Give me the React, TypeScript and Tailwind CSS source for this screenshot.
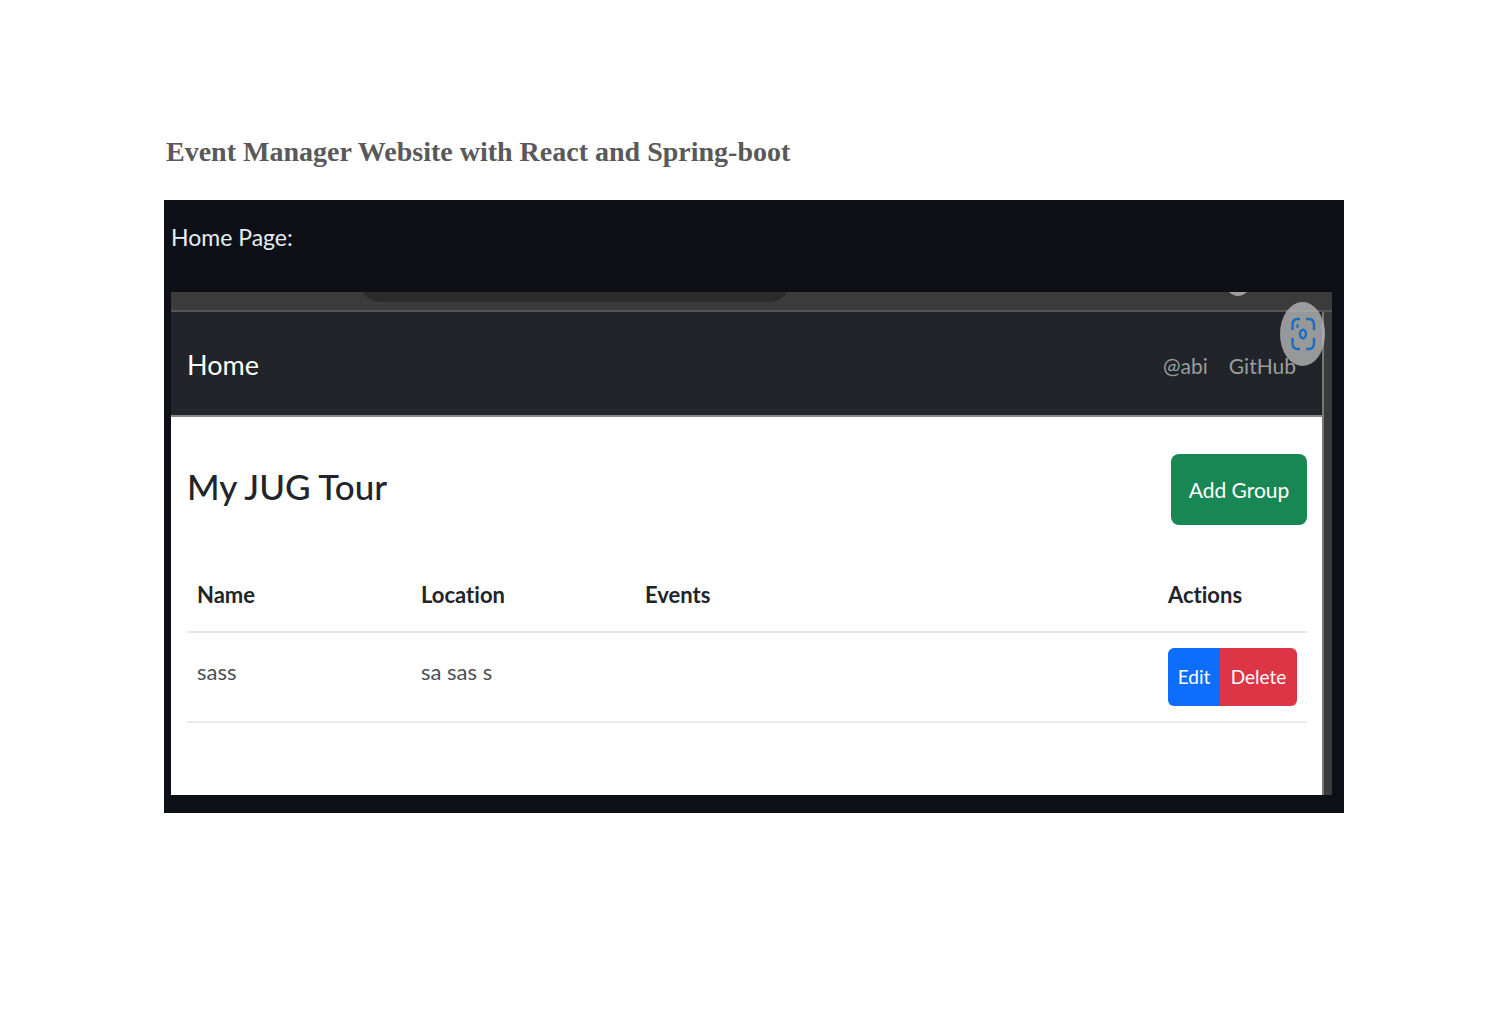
const groups = [{ name: 'sass', location: 'sa sas s', events: '' }];

function LensButton() {
  return (
    <button
      type="button"
      aria-label="Search this image"
      className="absolute -top-[10px] -right-[3px] h-16 w-[45px] rounded-[50%] bg-[#b4b5b6]/80"
    >
      <svg viewBox="0 0 45 64" className="h-full w-full" fill="none" stroke="#1a6cc4" strokeWidth="2.4">
        <path d="M12.500 28v-5q0-6 5-6h2.500" />
        <path d="M26 17h3q5 0 5 6v5" />
        <path d="M34 36v5q0 6-5 6h-3" />
        <path d="M20 47h-2.500q-5 0-5-6v-5" />
        <ellipse cx="23" cy="32" rx="3" ry="4.200" />
        <path d="M17.500 22v4" strokeWidth="2" />
      </svg>
    </button>
  );
}

function BrowserStrip() {
  return (
    <div className="flex h-5 items-start border-b-2 border-[#575757] bg-[#3b3b3b]">
      <div className="w-[192px]" />
      <svg viewBox="0 0 424 10" preserveAspectRatio="none" className="h-[10px] w-[424px]" fill="#2b2b2b">
        <path d="M0 0h424q-5 10-20 10H20Q5 10 0 0z" />
      </svg>
      <div className="grow" />
      <svg viewBox="0 0 18 4" className="mr-[85px] h-1 w-[18px]" fill="#a39d9d">
        <path d="M0 0h18q-9 8-18 0z" />
      </svg>
    </div>
  );
}

function Navbar() {
  return (
    <nav className="relative flex h-[105px] items-center border-b-2 border-[#85878a] bg-[#212529] pt-1 pr-[26px] pl-4">
      <a href="#home" className="grow text-[27px] text-white">
        Home
      </a>
      <div className="flex gap-[21px] text-[21px] text-[#9b9d9e]">
        <a href="#abi">@abi</a>
        <a href="#github">GitHub</a>
      </div>
      <LensButton />
    </nav>
  );
}

function GroupTable() {
  return (
    <table className="mt-[33px] w-full table-fixed text-left text-[22px] text-[#212529]">
      <thead>
        <tr className="h-[74px] border-b-2 border-[#e2e6ea]">
          <th className="w-[20%] px-[10px]">Name</th>
          <th className="w-[20%] px-[10px]">Location</th>
          <th className="px-[10px]">Events</th>
          <th className="w-[149px] px-[10px]">Actions</th>
        </tr>
      </thead>
      <tbody>
        {groups.map((group) => (
          <tr key={group.name} className="h-[90px] border-b-2 border-[#e9ebee] align-top text-[#4b4f54]">
            <td className="px-[10px] pt-[22px]">{group.name}</td>
            <td className="px-[10px] pt-[22px]">{group.location}</td>
            <td className="px-[10px] pt-[22px]">{group.events}</td>
            <td className="px-[10px] pt-[15px]">
              <div className="flex h-[58px] overflow-hidden rounded-md text-[19px] text-white">
                <button type="button" className="w-[52px] bg-[#0d6efd]">
                  Edit
                </button>
                <button type="button" className="grow bg-[#dc3545]">
                  Delete
                </button>
              </div>
            </td>
          </tr>
        ))}
      </tbody>
    </table>
  );
}

export default function App() {
  return (
    <main className="bg-white px-[160px] pt-[130px] pb-16 font-[Lato,sans-serif] [font-variant-ligatures:none]">
      <h1 className="pl-1.5 font-['Liberation_Serif',serif] text-[28px] leading-[44px] font-bold text-[#595959]">
        Event Manager Website with React and Spring-boot
      </h1>
      <section className="mt-[26px] ml-1 bg-[#0d1117] pr-3 pb-[18px] pl-[7px]">
        <h2 className="flex h-[92px] items-start pt-[21px] text-[23px] leading-8 text-[#e6edf3]">Home Page:</h2>
        <div className="bg-[#3b3b3b] pr-2">
          <div className="-mr-2">
            <BrowserStrip />
          </div>
          <div className="border-r-2 border-[#777777] bg-white">
            <Navbar />
            <div className="pt-[37px] pr-[15px] pb-[72px] pl-4">
              <div className="flex items-start justify-between">
                <h3 className="text-[35px] leading-[64px] font-medium text-[#212529]">My JUG Tour</h3>
                <button type="button" className="h-[71px] w-[136px] rounded-lg bg-[#198754] text-[21px] text-white">
                  Add Group
                </button>
              </div>
              <GroupTable />
            </div>
          </div>
        </div>
      </section>
    </main>
  );
}
